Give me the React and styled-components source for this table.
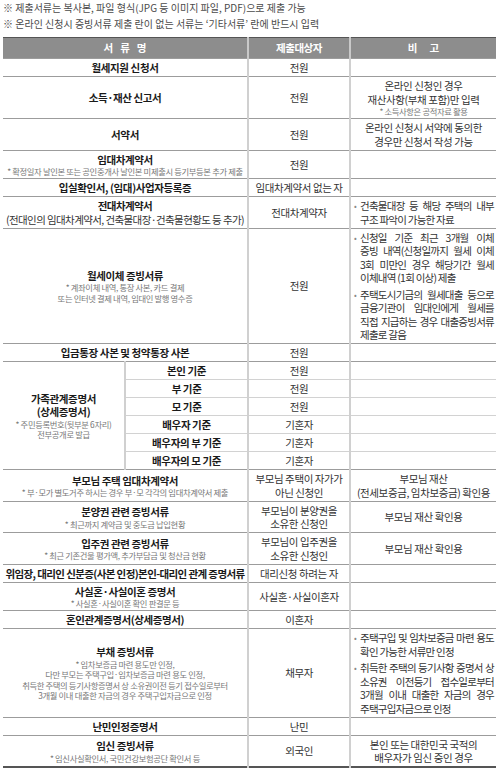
import React from "react";
import styled, { createGlobalStyle } from "styled-components";

const GlobalStyle = createGlobalStyle`
  body {
    margin: 0;
    background: #ffffff;
    color: #222;
    font-family: "Noto Sans CJK KR", "Noto Sans", sans-serif;
  }
`;

const Page = styled.div`
  width: 498px;
  box-sizing: border-box;
  padding: 0 2px 0 3px;
`;

const Notices = styled.div`
  margin-bottom: 5px;
`;

const Notice = styled.p`
  margin: 0;
  font-size: 10px;
  line-height: 16px;
  color: #4a4a4a;
`;

const Table = styled.table`
  width: 493px;
  table-layout: fixed;
  border-collapse: collapse;
  border-top: 1px solid #555;
  border-bottom: 2px solid #555;
  font-size: 10.5px;
  line-height: 13.5px;
  letter-spacing: -0.4px;
`;

const Col = styled.col`
  width: ${(p) => p.$w}px;
`;

const Head = styled.th`
  height: 20px;
  padding: 0;
  background: #8d8d8d;
  color: #ffffff;
  font-size: 10.5px;
  font-weight: 700;
  letter-spacing: -0.5px;
  & + & {
    border-left: 2px solid #c9c9c9;
  }
`;

const Spread = styled.span`
  display: inline-flex;
  gap: ${(p) => p.$gap}px;
  letter-spacing: 0;
`;

const Cell = styled.td`
  padding: 2px 2px 1.5px ${(p) => (p.$align === "left" ? "3px" : "2px")};
  text-align: ${(p) => p.$align || "center"};
  vertical-align: middle;
  color: #333;
  letter-spacing: ${(p) => (p.$tight ? "-0.6px" : "inherit")};
  border-top: 1px solid ${(p) => (p.$soft ? "#d2d2d2" : "#9c9c9c")};
  border-right: ${(p) => (p.$split ? "2px solid #d0d0d0" : "none")};
  & + & {
    border-left: 2px solid #d0d0d0;
  }
`;

const DocName = styled.strong`
  display: block;
  font-weight: 700;
  color: #1a1a1a;
`;

const Plain = styled.span`
  display: block;
`;

const Note = styled.span`
  display: block;
  font-size: 8.3px;
  line-height: 10.5px;
  letter-spacing: -0.35px;
  color: #777;
`;

const Bullet = styled.div`
  display: flex;
  & + & {
    margin-top: 3px;
  }
`;

const Dot = styled.span`
  flex: none;
  width: 6px;
  font-size: 8px;
  color: #888;
`;

const Lines = styled.div`
  flex: 1;
  min-width: 0;
  letter-spacing: -0.75px;
`;

const Line = styled.span`
  display: block;
  text-align: ${(p) => (p.$fill ? "justify" : "left")};
  text-align-last: ${(p) => (p.$fill ? "justify" : "left")};
`;

const Point = ({ lines }) => (
  <Bullet>
    <Dot>•</Dot>
    <Lines>
      {lines.map((t, i) => (
        <Line key={i} $fill={i < lines.length - 1}>
          {t}
        </Line>
      ))}
    </Lines>
  </Bullet>
);

const Spaced = ({ text, gap }) => (
  <Spread $gap={gap}>
    {text.split("").map((c, i) => (
      <span key={i}>{c}</span>
    ))}
  </Spread>
);

const family = [
  ["본인 기준", "전원"],
  ["부 기준", "전원"],
  ["모 기준", "전원"],
  ["배우자 기준", "기혼자"],
  ["배우자의 부 기준", "기혼자"],
  ["배우자의 모 기준", "기혼자"],
];

export default function App() {
  return (
    <Page>
      <GlobalStyle />
      <Notices>
        <Notice>※ 제출서류는 복사본, 파일 형식(JPG 등 이미지 파일, PDF)으로 제출 가능</Notice>
        <Notice>※ 온라인 신청시 증빙서류 제출 란이 없는 서류는 ‘기타서류’ 란에 반드시 입력</Notice>
      </Notices>

      <Table>
        <colgroup>
          <Col $w={122} />
          <Col $w={123} />
          <Col $w={102} />
          <Col $w={146} />
        </colgroup>
        <thead>
          <tr>
            <Head colSpan={2}><Spaced text="서류명" gap={7} /></Head>
            <Head>제출대상자</Head>
            <Head><Spaced text="비고" gap={12} /></Head>
          </tr>
        </thead>
        <tbody>
          <tr>
            <Cell colSpan={2}><DocName>월세지원 신청서</DocName></Cell>
            <Cell>전원</Cell>
            <Cell />
          </tr>
          <tr>
            <Cell colSpan={2}><DocName>소득·재산 신고서</DocName></Cell>
            <Cell>전원</Cell>
            <Cell>
              <Plain>온라인 신청인 경우</Plain>
              <Plain>재산사항(부채 포함)만 입력</Plain>
              <Note>* 소득사항은 공적자료 활용</Note>
            </Cell>
          </tr>
          <tr>
            <Cell colSpan={2}><DocName>서약서</DocName></Cell>
            <Cell>전원</Cell>
            <Cell>
              <Plain>온라인 신청시 서약에 동의한</Plain>
              <Plain>경우만 신청서 작성 가능</Plain>
            </Cell>
          </tr>
          <tr>
            <Cell colSpan={2}>
              <DocName>임대차계약서</DocName>
              <Note>* 확정일자 날인본 또는 공인중개사 날인본 미제출시 등기부등본 추가 제출</Note>
            </Cell>
            <Cell>전원</Cell>
            <Cell />
          </tr>
          <tr>
            <Cell colSpan={2}><DocName>입실확인서, (임대)사업자등록증</DocName></Cell>
            <Cell>임대차계약서 없는 자</Cell>
            <Cell />
          </tr>
          <tr>
            <Cell colSpan={2} $tight>
              <DocName>전대차계약서</DocName>
              <Plain>(전대인의 임대차계약서, 건축물대장·건축물현황도 등 추가)</Plain>
            </Cell>
            <Cell>전대차계약자</Cell>
            <Cell $align="left">
              <Point lines={["건축물대장 등 해당 주택의 내부", "구조 파악이 가능한 자료"]} />
            </Cell>
          </tr>
          <tr>
            <Cell colSpan={2}>
              <DocName>월세이체 증빙서류</DocName>
              <Note>* 계좌이체 내역, 통장 사본, 카드 결제</Note>
              <Note>또는 인터넷 결제 내역, 임대인 발행 영수증</Note>
            </Cell>
            <Cell>전원</Cell>
            <Cell $align="left">
              <Point
                lines={[
                  "신청일 기준 최근 3개월 이체",
                  "증빙 내역(신청일까지 월세 이체",
                  "3회 미만인 경우 해당기간 월세",
                  "이체내역 (1회 이상) 제출",
                ]}
              />
              <Point
                lines={[
                  "주택도시기금의 월세대출 등으로",
                  "금융기관이 임대인에게 월세를",
                  "직접 지급하는 경우 대출증빙서류",
                  "제출로 갈음",
                ]}
              />
            </Cell>
          </tr>
          <tr>
            <Cell colSpan={2}><DocName>입금통장 사본 및 청약통장 사본</DocName></Cell>
            <Cell>전원</Cell>
            <Cell />
          </tr>
          {family.map(([basis, who], i) => (
            <tr key={basis}>
              {i === 0 && (
                <Cell rowSpan={family.length} $split>
                  <DocName>가족관계증명서</DocName>
                  <DocName>(상세증명서)</DocName>
                  <Note>* 주민등록번호(뒷부분 6자리)</Note>
                  <Note>전부공개로 발급</Note>
                </Cell>
              )}
              <Cell $soft={i > 0}><DocName>{basis}</DocName></Cell>
              <Cell $soft={i > 0}>{who}</Cell>
              <Cell $soft={i > 0} />
            </tr>
          ))}
          <tr>
            <Cell colSpan={2}>
              <DocName>부모님 주택 임대차계약서</DocName>
              <Note>* 부·모가 별도거주 하시는 경우 부·모 각각의 임대차계약서 제출</Note>
            </Cell>
            <Cell>
              <Plain>부모님 주택이 자가가</Plain>
              <Plain>아닌 신청인</Plain>
            </Cell>
            <Cell>
              <Plain>부모님 재산</Plain>
              <Plain>(전세보증금, 임차보증금) 확인용</Plain>
            </Cell>
          </tr>
          <tr>
            <Cell colSpan={2}>
              <DocName>분양권 관련 증빙서류</DocName>
              <Note>* 최근까지 계약금 및 중도금 납입현황</Note>
            </Cell>
            <Cell>
              <Plain>부모님이 분양권을</Plain>
              <Plain>소유한 신청인</Plain>
            </Cell>
            <Cell>부모님 재산 확인용</Cell>
          </tr>
          <tr>
            <Cell colSpan={2}>
              <DocName>입주권 관련 증빙서류</DocName>
              <Note>* 최근 기존건물 평가액, 추가부담금 및 청산금 현황</Note>
            </Cell>
            <Cell>
              <Plain>부모님이 입주권을</Plain>
              <Plain>소유한 신청인</Plain>
            </Cell>
            <Cell>부모님 재산 확인용</Cell>
          </tr>
          <tr>
            <Cell colSpan={2} $tight>
              <DocName>위임장, 대리인 신분증(사본 인정)본인-대리인 관계 증명서류</DocName>
            </Cell>
            <Cell>대리신청 하려는 자</Cell>
            <Cell />
          </tr>
          <tr>
            <Cell colSpan={2}>
              <DocName>사실혼·사실이혼 증명서</DocName>
              <Note>* 사실혼·사실이혼 확인 판결문 등</Note>
            </Cell>
            <Cell>사실혼·사실이혼자</Cell>
            <Cell />
          </tr>
          <tr>
            <Cell colSpan={2}><DocName>혼인관계증명서(상세증명서)</DocName></Cell>
            <Cell>이혼자</Cell>
            <Cell />
          </tr>
          <tr>
            <Cell colSpan={2}>
              <DocName>부채 증빙서류</DocName>
              <Note>* 임차보증금 마련 용도만 인정,</Note>
              <Note>다만 부모는 주택구입·임차보증금 마련 용도 인정,</Note>
              <Note>취득한 주택의 등기사항증명서 상 소유권이전 등기 접수일로부터</Note>
              <Note>3개월 이내 대출한 자금의 경우 주택구입자금으로 인정</Note>
            </Cell>
            <Cell>채무자</Cell>
            <Cell $align="left">
              <Point lines={["주택구입 및 임차보증금 마련 용도", "확인 가능한 서류만 인정"]} />
              <Point
                lines={[
                  "취득한 주택의 등기사항 증명서 상",
                  "소유권 이전등기 접수일로부터",
                  "3개월 이내 대출한 자금의 경우",
                  "주택구입자금으로 인정",
                ]}
              />
            </Cell>
          </tr>
          <tr>
            <Cell colSpan={2}><DocName>난민인정증명서</DocName></Cell>
            <Cell>난민</Cell>
            <Cell />
          </tr>
          <tr>
            <Cell colSpan={2}>
              <DocName>임신 증빙서류</DocName>
              <Note>* 임신사실확인서, 국민건강보험공단 확인서 등</Note>
            </Cell>
            <Cell>외국인</Cell>
            <Cell>
              <Plain>본인 또는 대한민국 국적의</Plain>
              <Plain>배우자가 임신 중인 경우</Plain>
            </Cell>
          </tr>
        </tbody>
      </Table>
    </Page>
  );
}
